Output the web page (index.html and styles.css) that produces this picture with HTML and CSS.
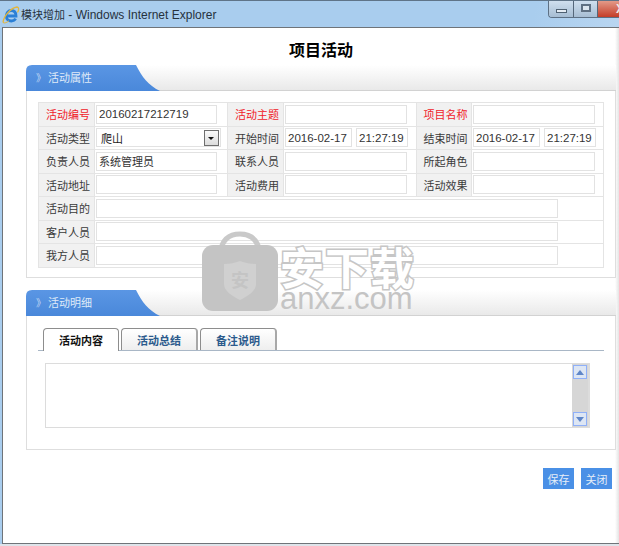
FILE: index.html
```html
<!DOCTYPE html>
<html lang="zh">
<head>
<meta charset="utf-8">
<title>模块增加</title>
<link rel="stylesheet" href="styles.css">
</head>
<body>
<div class="window">
  <header class="titlebar">
    <svg class="ie" viewBox="0 0 18 18" width="18" height="18">
      <path d="M4.500 10h9.500C14 6.500 12 4.500 9.200 4.500 6.300 4.500 4.300 7 4.300 10s2.200 5 5 5c2 0 3.500-.8 4.300-2.300" fill="none" stroke="#2a7fd6" stroke-width="2.800"/>
      <path d="M1 16.500C1.500 10 9 2 15 1c2 .2 2.200 2.500.5 5.500" fill="none" stroke="#e3b53c" stroke-width="1.300"/>
      <path d="M1 16.500c1.500 1.200 4-.2 6-1.700" fill="none" stroke="#e3b53c" stroke-width="1"/>
    </svg>
    <span class="wintitle"><span class="wt-cn">模块增加</span> - Windows Internet Explorer</span>
    <div class="winbtns">
      <span class="wb wb-min"><i></i></span>
      <span class="wb wb-max"><i></i></span>
      <span class="wb wb-close"><em>X</em></span>
    </div>
  </header>
  <main class="client">
    <h1 class="pagetitle">项目活动</h1>

    <section class="panel panel-attr">
      <div class="panelhead"><div class="paneltab"><span class="chev">》</span>活动属性</div></div>
      <div class="panelbody">
        <table class="form">
          <colgroup><col class="c-l"><col class="c-v"><col class="c-l"><col class="c-v"><col class="c-l3"><col class="c-v3"></colgroup>
          <tr>
            <th class="req">活动编号</th><td><input class="in w1 mono" value="20160217212719"></td>
            <th class="req">活动主题</th><td><input class="in w2"></td>
            <th class="req">项目名称</th><td><input class="in w2"></td>
          </tr>
          <tr>
            <th>活动类型</th><td><div class="select"><span>爬山</span><b class="arrow"></b></div></td>
            <th>开始时间</th><td><div class="pair"><input class="in d mono" value="2016-02-17"><input class="in t mono" value="21:27:19"></div></td>
            <th>结束时间</th><td><div class="pair"><input class="in d mono" value="2016-02-17"><input class="in t mono" value="21:27:19"></div></td>
          </tr>
          <tr>
            <th>负责人员</th><td><input class="in w1" value="系统管理员"></td>
            <th>联系人员</th><td><input class="in w2"></td>
            <th>所起角色</th><td><input class="in w2"></td>
          </tr>
          <tr>
            <th>活动地址</th><td><input class="in w1"></td>
            <th>活动费用</th><td><input class="in w2"></td>
            <th>活动效果</th><td><input class="in w2"></td>
          </tr>
          <tr><th>活动目的</th><td colspan="5"><input class="in wide"></td></tr>
          <tr><th>客户人员</th><td colspan="5"><input class="in wide"></td></tr>
          <tr><th>我方人员</th><td colspan="5"><input class="in wide"></td></tr>
        </table>
      </div>
    </section>

    <section class="panel panel-detail">
      <div class="panelhead"><div class="paneltab"><span class="chev">》</span>活动明细</div></div>
      <div class="panelbody detailbody">
        <nav class="tabs">
          <span class="tab on">活动内容</span>
          <span class="tab">活动总结</span>
          <span class="tab">备注说明</span>
        </nav>
        <div class="textarea">
          <div class="scroll">
            <span class="sb"><svg viewBox="0 0 8 5" width="8" height="5"><path d="M0 5L4 0l4 5z" fill="#5f86c8"/></svg></span>
            <span class="sb"><svg viewBox="0 0 8 5" width="8" height="5"><path d="M0 0l4 5 4-5z" fill="#5f86c8"/></svg></span>
          </div>
        </div>
      </div>
    </section>

    <div class="actions">
      <button class="btn">保存</button>
      <button class="btn">关闭</button>
    </div>

    <div class="watermark">
      <svg class="lock" viewBox="0 0 76 80" width="76" height="80">
        <path d="M18 22C20 8 28 3 38 3s18 5 20 19" fill="none" stroke="#c9c9c9" stroke-width="5"/>
        <rect x="0" y="14" width="76" height="66" rx="11" fill="#c4c4c4"/>
        <path d="M22 33c6 0 11-1 16-3 5 2 10 3 16 3v20c0 7-8 12-16 16-8-4-16-9-16-16z" fill="#d0d0d0"/>
        <text x="38" y="56" class="lockchar">安</text>
      </svg>
      <div class="wmtext">
        <div class="wmcn">安下载</div>
        <div class="wmen">anxz.com</div>
      </div>
    </div>
  </main>
  <div class="winfoot"></div>
</div>
</body>
</html>
```
FILE: styles.css
```css
* { box-sizing: border-box; }
html, body { margin: 0; padding: 0; }
body {
  width: 619px;
  height: 546px;
  overflow: hidden;
  font-family: "Noto Sans CJK SC", "Liberation Sans", sans-serif;
  font-size: 12px;
  background: #a9cbeb;
}
.window {
  width: 619px;
  height: 546px;
  display: flex;
  flex-direction: column;
  background: linear-gradient(100deg, #a9cdee 0%, #a9cdee 75%, #c8def3 100%);
}
.titlebar {
  height: 27px;
  flex: none;
  display: flex;
  align-items: center;
  padding-left: 2px;
  border-top: 1px solid #5f7488;
}
.ie { flex: none; margin-top: 1px; }
.wintitle {
  margin-left: 1px;
  margin-top: -1px;
  font-size: 12px;
  color: #26313d;
  font-family: "Liberation Sans", "Noto Sans CJK SC", sans-serif;
}
.wt-cn { font-size: 11px; }
.winbtns {
  margin-left: auto;
  align-self: flex-start;
  height: 17px;
  width: 71px;
  display: flex;
  flex: none;
  border: 1px solid #5d7084;
  border-top: 0;
  border-right: 0;
  border-radius: 0 0 0 4px;
  overflow: hidden;
}
.wb {
  width: 25px;
  flex: none;
  display: flex;
  align-items: center;
  justify-content: center;
  background: linear-gradient(#cfdfee, #a6bdd3);
  border-right: 1px solid #55677a;
}
.wb-max { width: 24px; }
.wb-min i { width: 11px; height: 4px; margin-top: 4px; background: #e6edf4; border: 1px solid #4f6172; display: block; }
.wb-max i { width: 10px; height: 8px; margin-top: -2px; border: 2px solid #5f7082; background: #dbe5ee; display: block; }
.wb-close {
  width: 22px;
  background: linear-gradient(#e39a88, #c43d28);
  color: #ececec;
  border-right: 0;
  font: bold 12px "Liberation Sans", sans-serif;
  justify-content: flex-end;
}
.wb-close em { font-style: normal; margin-right: -4px; }
.client {
  position: relative;
  flex: 1;
  margin: 0 0 0 2px;
  background: linear-gradient(to left, #e4e4e4, #ffffff 4px);
  border: 1px solid #6f7479;
  border-right: 0;
  padding: 0 3px 0 23px;
}
.winfoot { flex: none; height: 2px; background: #dfe4ea; }
.pagetitle {
  margin: 0;
  height: 37px;
  padding-top: 9px;
  text-align: center;
  font-size: 16px;
  line-height: 24px;
  font-weight: 700;
  color: #000;
}
.panel {
  border: 1px solid #dedede;
  border-top: 1px solid #d4d4d4;
  background: #fff;
}
.panel-attr { height: 213px; }
.panel-detail { margin-top: 12px; height: 160px; }
.panelhead {
  height: 26px;
  background: linear-gradient(#ffffff, #e9e9e9);
  border-bottom: 1px solid #d2d2d2;
  position: relative;
  margin: -1px -1px 0 -1px;
}
.paneltab {
  width: 134px;
  height: 26px;
  color: #dfeaf8;
  line-height: 25px;
  padding-left: 13px;
  font-size: 11px;
  background: linear-gradient(#5a96e4, #4a88da);
  clip-path: path("M0 26V6Q0 0 6 0H110C116 12 122 20 134 26Z");
}
.chev { font-size: 10px; margin-right: 1px; color: #c7dbf5; display: inline-block; width: 11px; margin-left: -3px; }
.panelbody { padding: 11px 11px 0 11px; }
.form {
  border-collapse: collapse;
  table-layout: fixed;
  width: 565px;
}
.c-l { width: 56px; }
.c-v { width: 133px; }
.c-l3 { width: 55px; }
.c-v3 { width: 132px; }
.form th, .form td {
  border: 1px solid #e4e4e4;
  padding: 0;
  height: 23.5px;
}
.form th {
  background: #f1f1f1;
  font-weight: 400;
  color: #3a3a3a;
  font-size: 11px;
  text-align: center;
  padding-left: 3px;
}
.form th.req { color: #f0212a; }
.form td { padding-left: 1px; }
.in {
  display: block;
  height: 19px;
  border: 1px solid #e2e2e2;
  background: #fff;
  padding: 0 2px;
  margin: 0;
  font-family: "Noto Sans CJK SC", "Liberation Sans", sans-serif;
  font-size: 11px;
  color: #333;
  outline: 0;
}
.mono { font-family: "Liberation Sans", sans-serif; font-size: 11.5px; }
.w1 { width: 121px; }
.w2 { width: 122px; }
.wide { width: 462px; }
.pair { display: flex; gap: 4px; }
.d { width: 67px; }
.t { width: 52px; }
.select {
  width: 125px;
  height: 19px;
  border: 1px solid #e2e2e2;
  background: #fff;
  display: flex;
  align-items: center;
  justify-content: space-between;
  padding: 0 1px 0 4px;
  color: #222;
  font-size: 11px;
}
.arrow {
  width: 15px;
  height: 16px;
  border: 1px solid #6e6e6e;
  background: linear-gradient(#fafafa, #dcdcdc);
  position: relative;
}
.arrow::after {
  content: "";
  position: absolute;
  left: 3px;
  top: 6px;
  border: 3px solid transparent;
  border-top: 3px solid #111;
  border-bottom: 0;
}
.detailbody { padding: 12px 0 0 11px; }
.tabs {
  display: flex;
  gap: 2px;
  height: 23px;
  width: 566px;
  border-bottom: 1px solid #a9b7c6;
  padding-left: 5px;
}
.tab {
  width: 77px;
  height: 22px;
  border: 1px solid #8d8d8d;
  border-bottom: 0;
  border-right: 2px solid #a8a8a8;
  border-radius: 4px 4px 0 0;
  background: linear-gradient(#ffffff, #eeeeee);
  color: #2b5a8c;
  font-weight: 700;
  font-size: 11px;
  text-align: center;
  line-height: 22px;
}
.tab.on {
  width: 76px;
  height: 23px;
  background: #fff;
  color: #111;
  border-right: 1px solid #8d8d8d;
}
.textarea {
  margin: 12px 0 0 7px;
  width: 545px;
  height: 65px;
  border: 1px solid #dcdcdc;
  border-right: 2px solid #dcdcdc;
  position: relative;
  display: flex;
  justify-content: flex-end;
}
.scroll {
  width: 16px;
  background: #d6d6d6;
  display: flex;
  flex-direction: column;
  justify-content: space-between;
}
.sb {
  height: 14px;
  width: 14px;
  margin: 1px;
  border: 1px solid #8fb0f8;
  background: #dde6f4;
  display: flex;
  align-items: center;
  justify-content: center;
}
.actions {
  display: flex;
  justify-content: flex-end;
  gap: 7px;
  margin-top: 18px;
  padding-right: 4px;
}
.btn {
  width: 31px;
  height: 21px;
  padding: 0;
  border: 0;
  background: #4a90e6;
  color: #e6eef8;
  font-family: "Noto Sans CJK SC", sans-serif;
  font-size: 11px;
}
.watermark {
  position: absolute;
  left: 199px;
  top: 203px;
  display: flex;
  gap: 2px;
  pointer-events: none;
}
.lock { display: block; }
.lockchar { font-size: 18px; fill: #c4c4c4; text-anchor: middle; font-weight: 700; }
.wmtext { margin-top: 15px; }
.wmcn {
  font-size: 44px;
  line-height: 40px;
  letter-spacing: 1px;
  font-weight: 700;
  color: #fff;
  -webkit-text-stroke: 3px #c6c6c6;
  paint-order: stroke fill;
  white-space: nowrap;
}
.wmen {
  font: 400 31px/25px "Liberation Sans", sans-serif;
  color: #c4c4c4;
}
```
